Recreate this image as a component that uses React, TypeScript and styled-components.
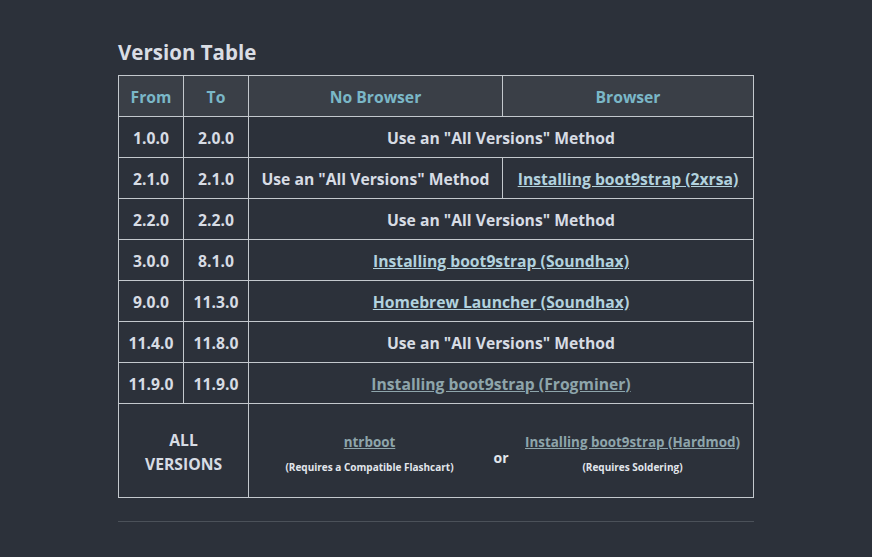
import React from "react";
import styled, { createGlobalStyle } from "styled-components";

const Global = createGlobalStyle`
  html, body { margin: 0; padding: 0; background: #2c313a; }
  body { font-family: "Open Sans", "Noto Sans", sans-serif; color: #d7dce4; }
`;

const Page = styled.main`
  width: 636px;
  margin: 0 auto;
  padding-top: 38px;
`;

const Title = styled.h2`
  margin: 0 0 9px;
  font-size: 20.5px;
  line-height: 28px;
  font-weight: 700;
  color: #d9dde4;
`;

const Table = styled.table`
  width: 100%;
  border-collapse: collapse;
  table-layout: fixed;
  text-align: center;
`;

const Th = styled.th`
  background: #3a3f47;
  color: #7ab7c7;
  border: 1px solid #c3c8cd;
  padding: 9px 4px 7px;
  font-size: 15.7px;
  line-height: 24px;
  font-weight: 700;
`;

const Td = styled.td<{ $tall?: boolean }>`
  border: 1px solid #c3c8cd;
  padding: ${(p) => (p.$tall ? "24px 8px 21px" : "9px 4px 7px")};
  font-size: 15.7px;
  line-height: 24px;
  font-weight: 700;
  color: #d7dce4;
  vertical-align: middle;
`;

const Link = styled.a<{ $visited?: boolean; $small?: boolean }>`
  color: ${(p) => (p.$visited ? "#8ea5ab" : "#b2d2de")};
  text-decoration: underline;
  font-size: ${(p) => (p.$small ? "13.4px" : "15.7px")};
  font-weight: 700;
  cursor: pointer;
`;

const Choice = styled.div`
  display: grid;
  grid-template-columns: 1fr 34px 1fr;
  align-items: center;
  padding: 0 2px;
`;

const Option = styled.div`
  display: flex;
  flex-direction: column;
  align-items: center;
  gap: 6px;
`;

const Note = styled.span`
  font-size: 10px;
  line-height: 14px;
  font-weight: 700;
  color: #e2e6ec;
`;

const Or = styled.span`
  padding-top: 12px;
  font-size: 14px;
  font-weight: 700;
  color: #e2e6ec;
`;

const Rule = styled.hr`
  margin: 23px 0 0;
  border: 0;
  border-top: 1px solid #4b5159;
`;

const AVM = 'Use an "All Versions" Method';

type Row = { from: string; to: string; cells: React.ReactNode[] };

const rows: Row[] = [
  { from: "1.0.0", to: "2.0.0", cells: [AVM] },
  { from: "2.1.0", to: "2.1.0", cells: [AVM, <Link>Installing boot9strap (2xrsa)</Link>] },
  { from: "2.2.0", to: "2.2.0", cells: [AVM] },
  { from: "3.0.0", to: "8.1.0", cells: [<Link>Installing boot9strap (Soundhax)</Link>] },
  { from: "9.0.0", to: "11.3.0", cells: [<Link>Homebrew Launcher (Soundhax)</Link>] },
  { from: "11.4.0", to: "11.8.0", cells: [AVM] },
  { from: "11.9.0", to: "11.9.0", cells: [<Link $visited>Installing boot9strap (Frogminer)</Link>] },
];

export default function App() {
  return (
    <>
      <Global />
      <Page>
        <Title>Version Table</Title>
        <Table>
          <colgroup>
            <col style={{ width: 65 }} />
            <col style={{ width: 65 }} />
            <col style={{ width: 254 }} />
            <col />
          </colgroup>
          <thead>
            <tr>
              <Th>From</Th>
              <Th>To</Th>
              <Th>No Browser</Th>
              <Th>Browser</Th>
            </tr>
          </thead>
          <tbody>
            {rows.map((r) => (
              <tr key={r.from}>
                <Td>{r.from}</Td>
                <Td>{r.to}</Td>
                {r.cells.length === 1 ? (
                  <Td colSpan={2}>{r.cells[0]}</Td>
                ) : (
                  r.cells.map((c, i) => <Td key={i}>{c}</Td>)
                )}
              </tr>
            ))}
            <tr>
              <Td colSpan={2} $tall>
                ALL
                <br />
                VERSIONS
              </Td>
              <Td colSpan={2}>
                <Choice>
                  <Option>
                    <Link $visited $small>ntrboot</Link>
                    <Note>(Requires a Compatible Flashcart)</Note>
                  </Option>
                  <Or>or</Or>
                  <Option>
                    <Link $visited $small>Installing boot9strap (Hardmod)</Link>
                    <Note>(Requires Soldering)</Note>
                  </Option>
                </Choice>
              </Td>
            </tr>
          </tbody>
        </Table>
        <Rule />
      </Page>
    </>
  );
}
